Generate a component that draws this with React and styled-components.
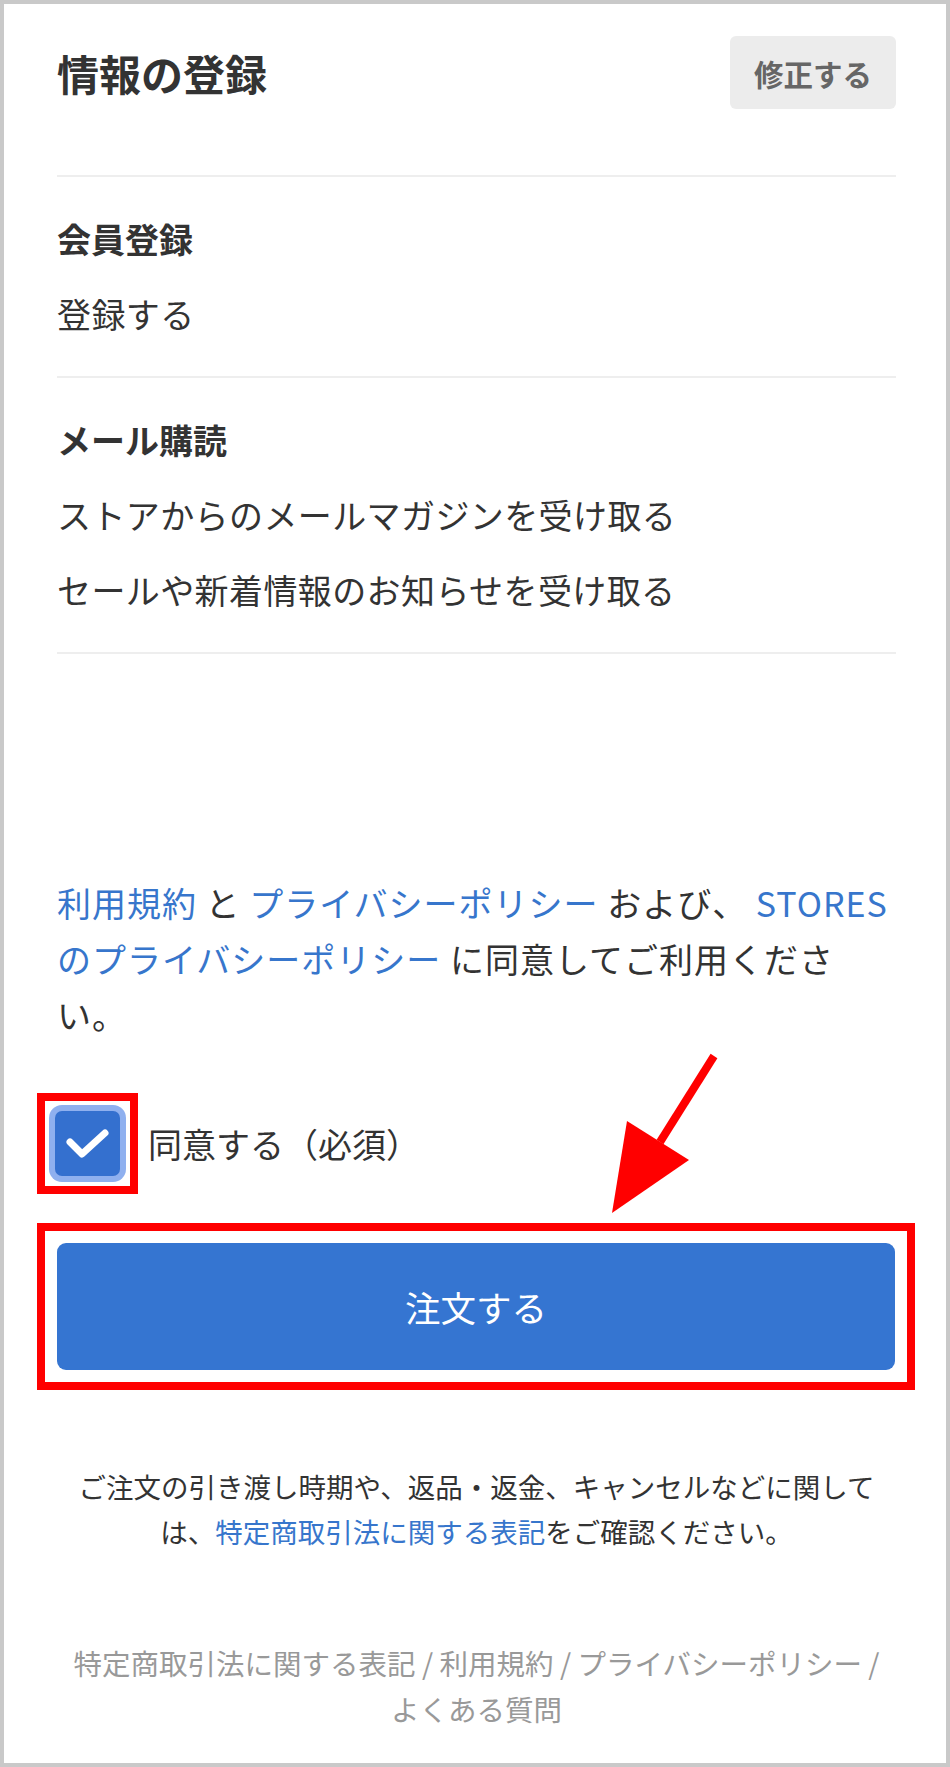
import React from "react";
import styled, { createGlobalStyle } from "styled-components";

const Global = createGlobalStyle`
  html, body { margin: 0; padding: 0; background: #fff; }
  body { font-family: "Noto Sans CJK JP", "Noto Sans", sans-serif; color: #333; }
  * { box-sizing: border-box; }
`;

const Frame = styled.div`
  position: relative;
  width: 950px;
  height: 1767px;
  border: 4px solid #c9c9c9;
  background: #fff;
  padding: 32px 50px 0 53px;
  display: flex;
  flex-direction: column;
`;

const Header = styled.header`
  display: flex;
  justify-content: space-between;
  align-items: center;
  padding-bottom: 66px;
  border-bottom: 2px solid #eeeeee;
`;

const Title = styled.h1`
  margin: 0;
  font-size: 42px;
  line-height: 73px;
  font-weight: 700;
  color: #333;
`;

const EditButton = styled.button`
  height: 73px;
  padding: 0 24px;
  border: none;
  border-radius: 6px;
  background: #ececec;
  color: #666;
  font-family: inherit;
  font-size: 29.5px;
  font-weight: 700;
`;

const Section = styled.section`
  padding: 35.5px 0 37.5px;
  border-bottom: 2px solid #eeeeee;
  display: flex;
  flex-direction: column;
  gap: 24px;
`;

const Label = styled.div`
  font-size: 34px;
  line-height: 51px;
  font-weight: 700;
`;

const Value = styled.div`
  font-size: 34px;
  line-height: 51px;
  letter-spacing: 0.4px;
`;

const Terms = styled.p`
  margin: 221px 0 0;
  font-size: 34px;
  line-height: 56px;
  letter-spacing: 1px;
  color: #333;
`;

const Link = styled.a`
  color: #3776cc;
  text-decoration: none;
`;

const AgreeRow = styled.label`
  margin-top: 50px;
  display: flex;
  align-items: center;
  gap: 10px;
`;

const Highlight = styled.div`
  border: 8px solid #ff0000;
  padding: ${(p) => p.$pad}px;
  margin: ${(p) => p.$margin};
`;

const Checkbox = styled.span`
  display: flex;
  align-items: center;
  justify-content: center;
  width: 65px;
  height: 65px;
  margin: 6px;
  border-radius: 7px;
  background: #3470cf;
  box-shadow: 0 0 0 6px #8fb0ef;
`;

const AgreeText = styled.span`
  font-size: 34px;
  line-height: 51px;
  color: #333;
`;

const OrderButton = styled.button`
  display: block;
  width: 100%;
  height: 127px;
  border: none;
  border-radius: 9px;
  background: #3575d1;
  color: #fff;
  font-family: inherit;
  font-size: 35.5px;
  font-weight: 400;
`;

const Note = styled.p`
  margin: 74px 0 0;
  padding: 0 18px;
  font-size: 27.5px;
  line-height: 45px;
  text-align: center;
  color: #333;
`;

const FooterLinks = styled.nav`
  margin-top: 86px;
  font-size: 28.5px;
  line-height: 46px;
  text-align: center;
  color: #999;
`;

const FooterLink = styled.a`
  color: #999;
  text-decoration: none;
`;

const Arrow = styled.svg`
  position: absolute;
  left: 590px;
  top: 1040px;
  pointer-events: none;
`;

export default function App() {
  return (
    <>
      <Global />
      <Frame>
        <Header>
          <Title>情報の登録</Title>
          <EditButton>修正する</EditButton>
        </Header>

        <Section>
          <Label>会員登録</Label>
          <Value>登録する</Value>
        </Section>

        <Section>
          <Label>メール購読</Label>
          <Value>ストアからのメールマガジンを受け取る</Value>
          <Value>セールや新着情報のお知らせを受け取る</Value>
        </Section>

        <Terms>
          <Link href="#">利用規約</Link> と <Link href="#">プライバシーポリシー</Link> および、 <Link href="#">STORES のプライバシーポリシー</Link> に同意してご利用ください。
        </Terms>

        <AgreeRow>
          <Highlight $pad={4} $margin="0 0 0 -20px">
            <Checkbox>
              <svg width="65" height="65" viewBox="0 0 65 65">
                <polyline
                  points="15,31 27,43 50,22"
                  fill="none"
                  stroke="#fff"
                  strokeWidth="7"
                  strokeLinecap="round"
                  strokeLinejoin="round"
                />
              </svg>
            </Checkbox>
          </Highlight>
          <AgreeText>同意する（必須）</AgreeText>
        </AgreeRow>

        <Highlight $pad={12} $margin="29px -19px 0 -20px">
          <OrderButton>注文する</OrderButton>
        </Highlight>

        <Note>
          ご注文の引き渡し時期や、返品・返金、キャンセルなどに関しては、<Link href="#">特定商取引法に関する表記</Link>をご確認ください。
        </Note>

        <FooterLinks>
          <FooterLink href="#">特定商取引法に関する表記</FooterLink> / <FooterLink href="#">利用規約</FooterLink> / <FooterLink href="#">プライバシーポリシー</FooterLink> / <FooterLink href="#">よくある質問</FooterLink>
        </FooterLinks>

        <Arrow width="140" height="180" viewBox="0 0 140 180">
          <line x1="120" y1="12" x2="66" y2="98" stroke="#ff0000" strokeWidth="8" />
          <polygon points="18,169 33,77 95,116" fill="#ff0000" />
        </Arrow>
      </Frame>
    </>
  );
}
